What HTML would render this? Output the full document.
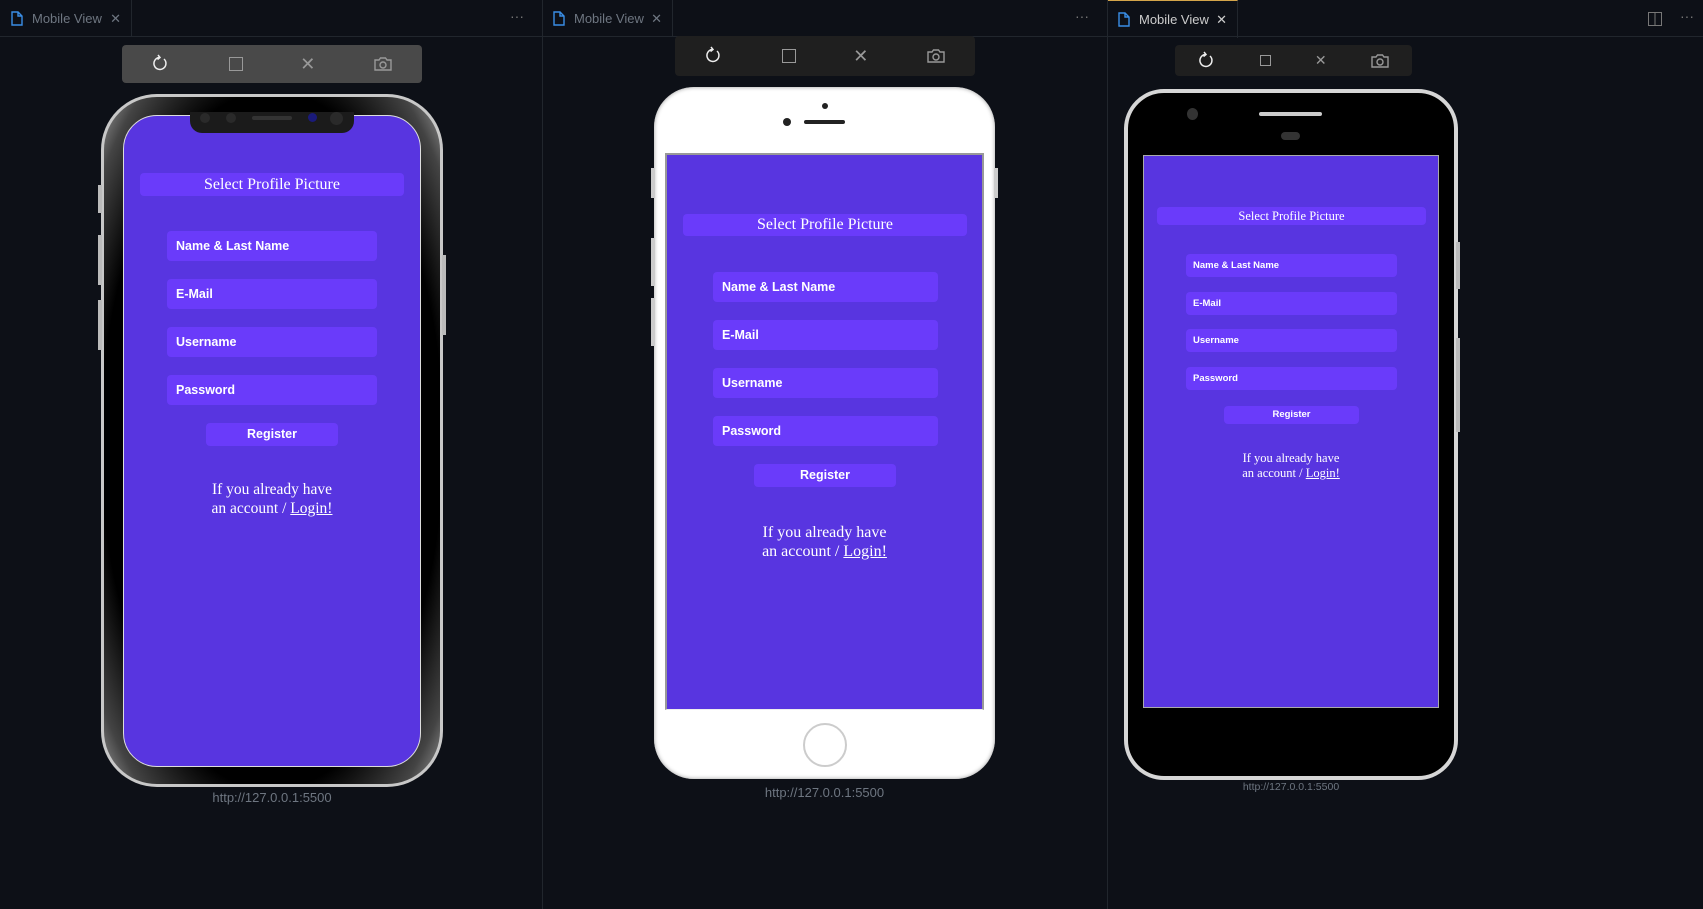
<!DOCTYPE html><html><head><style>
*{margin:0;padding:0;box-sizing:border-box}
body{width:1703px;height:909px;background:#0d1017;position:relative;overflow:hidden;font-family:"Liberation Sans",sans-serif}
.a{position:absolute}
.tabbar{top:0;height:37px;border-bottom:1px solid #21262d;background:#0d1017}
.tab{top:0;height:37px;color:#6e7681;font-size:13px;line-height:37px;padding-left:32px;border-right:1px solid #21262d}
.tab svg.ic{position:absolute;left:11px;top:11px}
.tab .x{position:absolute;right:10px;top:0;font-size:13px}
.div{top:0;width:1px;height:909px;background:#21262d}
.scr{background:#5835e0;overflow:hidden}
.f{background:#6a3bfa;border-radius:4px;color:#fff;font-weight:bold}
.t{color:#fff;font-family:"Liberation Serif",serif;text-align:center}
.tb{display:flex;justify-content:space-around;align-items:center;border-radius:4px}
.url{color:#6e7681;text-align:center}
</style></head><body>
<div class="a tabbar" style="left:0;width:1703px"></div>
<div class="a tab" style="left:0;width:132px"><svg class="ic" width="12" height="15" viewBox="0 0 12 15"><path d="M1 1h6l4 4v9H1z M7 1v4h4" fill="none" stroke="#3a8ee6" stroke-width="1.4"/></svg>Mobile View<span class="x">✕</span></div>
<div class="a tab" style="left:542px;width:131px"><svg class="ic" width="12" height="15" viewBox="0 0 12 15"><path d="M1 1h6l4 4v9H1z M7 1v4h4" fill="none" stroke="#3a8ee6" stroke-width="1.4"/></svg>Mobile View<span class="x">✕</span></div>
<div class="a tab" style="left:1107px;width:131px;color:#ccc;border-top:1px solid #d4a54a;height:38px"><svg class="ic" width="12" height="15" viewBox="0 0 12 15"><path d="M1 1h6l4 4v9H1z M7 1v4h4" fill="none" stroke="#3a8ee6" stroke-width="1.4"/></svg>Mobile View<span class="x" style="color:#ccc">✕</span></div>
<div class="a" style="left:510px;top:8px;color:#777;font-size:14px">···</div>
<div class="a" style="left:1075px;top:8px;color:#777;font-size:14px">···</div>
<div class="a" style="left:1680px;top:8px;color:#777;font-size:14px">···</div>
<svg class="a" style="left:1648px;top:12px" width="14" height="14"><rect x="0.5" y="0.5" width="13" height="13" fill="none" stroke="#777"/><line x1="7" y1="0" x2="7" y2="14" stroke="#777"/></svg>
<div class="a div" style="left:542px"></div><div class="a div" style="left:1107px"></div>

<!-- toolbars -->
<svg width="0" height="0" style="position:absolute"><defs>
<g id="ref"><path d="M13 5a6 6 0 1 1-5-1.5" fill="none" stroke="#eee" stroke-width="1.5"/><path d="M7 1l2 2.5-2.5 2" fill="none" stroke="#eee" stroke-width="1.5"/></g>
<g id="cam"><path d="M2 6h4l1.5-2h5L14 6h4v10H2z" fill="none" stroke="#999" stroke-width="1.4"/><circle cx="10" cy="11" r="3" fill="none" stroke="#999" stroke-width="1.4"/></g>
</defs></svg>
<div class="a tb" style="left:122px;top:45px;width:300px;height:38px;background:#494949;color:#999;font-size:18px"><svg width="20" height="20"><use href="#ref"/></svg><span style="width:14px;height:14px;border:1.5px solid #999;display:inline-block"></span><span>✕</span><svg width="20" height="20"><use href="#cam"/></svg></div>
<div class="a tb" style="left:675px;top:36px;width:300px;height:40px;background:#1f1f1f;color:#999;font-size:18px"><svg width="20" height="20"><use href="#ref"/></svg><span style="width:14px;height:14px;border:1.5px solid #999;display:inline-block"></span><span>✕</span><svg width="20" height="20"><use href="#cam"/></svg></div>
<div class="a tb" style="left:1175px;top:45px;width:237px;height:31px;background:#1f1f1f;color:#999;font-size:14px"><svg width="20" height="20"><use href="#ref"/></svg><span style="width:11px;height:11px;border:1.5px solid #999;display:inline-block"></span><span>✕</span><svg width="20" height="20"><use href="#cam"/></svg></div>

<!-- phone 1 -->
<div class="a" style="left:101px;top:94px;width:342px;height:693px;border-radius:56px;background:#c8c8c8;padding:3px"><div style="width:100%;height:100%;border-radius:53px;background:radial-gradient(ellipse,#000 72%,#444 90%,#999)"></div></div>
<div class="a" style="left:98px;top:185px;width:4px;height:28px;background:#bbb"></div>
<div class="a" style="left:98px;top:235px;width:4px;height:50px;background:#bbb"></div>
<div class="a" style="left:98px;top:300px;width:4px;height:50px;background:#bbb"></div>
<div class="a" style="left:442px;top:255px;width:4px;height:80px;background:#bbb"></div>
<div class="a scr" style="left:123px;top:115px;width:298px;height:652px;border-radius:34px;border:1px solid #ddd"></div>
<div class="a" style="left:190px;top:112px;width:164px;height:21px;background:#1b1b1b;border-radius:0 0 12px 12px"></div>
<div class="a" style="left:252px;top:116px;width:40px;height:4px;background:#333;border-radius:2px"></div>
<div class="a" style="left:308px;top:113px;width:9px;height:9px;background:#1a1a7a;border-radius:50%"></div>
<div class="a" style="left:200px;top:113px;width:10px;height:10px;background:#2a2a2a;border-radius:50%"></div>
<div class="a" style="left:226px;top:113px;width:10px;height:10px;background:#2a2a2a;border-radius:50%"></div>
<div class="a" style="left:330px;top:112px;width:13px;height:13px;background:#2a2a2a;border-radius:50%"></div>
<div class="a f t" style="left:140px;top:173px;width:264px;height:23px;font-weight:normal;font-size:16px;line-height:23px">Select Profile Picture</div>
<div class="a f" style="left:167px;top:231px;width:210px;height:30px;font-size:12.5px;line-height:30px;padding-left:9px">Name &amp; Last Name</div>
<div class="a f" style="left:167px;top:279px;width:210px;height:30px;font-size:12.5px;line-height:30px;padding-left:9px">E-Mail</div>
<div class="a f" style="left:167px;top:327px;width:210px;height:30px;font-size:12.5px;line-height:30px;padding-left:9px">Username</div>
<div class="a f" style="left:167px;top:375px;width:210px;height:30px;font-size:12.5px;line-height:30px;padding-left:9px">Password</div>
<div class="a f" style="left:206px;top:423px;width:132px;height:23px;font-size:12.5px;line-height:23px;text-align:center">Register</div>
<div class="a t" style="left:123px;top:480px;width:298px;font-size:15.5px;line-height:19px">If you already have<br>an account / <u>Login!</u></div>
<div class="a url" style="left:123px;top:790px;width:298px;font-size:13px">http://127.0.0.1:5500</div>

<!-- phone 2 -->
<div class="a" style="left:654px;top:87px;width:341px;height:692px;border-radius:40px;background:#fff;box-shadow:inset 0 0 4px #999"></div>
<div class="a" style="left:651px;top:168px;width:4px;height:30px;background:#ccc"></div>
<div class="a" style="left:651px;top:238px;width:4px;height:48px;background:#ccc"></div>
<div class="a" style="left:651px;top:298px;width:4px;height:48px;background:#ccc"></div>
<div class="a" style="left:994px;top:168px;width:4px;height:30px;background:#ccc"></div>
<div class="a" style="left:822px;top:103px;width:6px;height:6px;background:#222;border-radius:50%"></div>
<div class="a" style="left:783px;top:118px;width:8px;height:8px;background:#222;border-radius:50%"></div>
<div class="a" style="left:804px;top:120px;width:41px;height:4px;background:#222;border-radius:2px"></div>
<div class="a scr" style="left:665px;top:153px;width:319px;height:557px;border:2px solid #999;border-bottom:1px solid #eee"></div>
<div class="a f t" style="left:683px;top:214px;width:284px;height:22px;font-weight:normal;font-size:16px;line-height:22px">Select Profile Picture</div>
<div class="a f" style="left:713px;top:272px;width:225px;height:30px;font-size:12.5px;line-height:30px;padding-left:9px">Name &amp; Last Name</div>
<div class="a f" style="left:713px;top:320px;width:225px;height:30px;font-size:12.5px;line-height:30px;padding-left:9px">E-Mail</div>
<div class="a f" style="left:713px;top:368px;width:225px;height:30px;font-size:12.5px;line-height:30px;padding-left:9px">Username</div>
<div class="a f" style="left:713px;top:416px;width:225px;height:30px;font-size:12.5px;line-height:30px;padding-left:9px">Password</div>
<div class="a f" style="left:754px;top:464px;width:142px;height:23px;font-size:12.5px;line-height:23px;text-align:center">Register</div>
<div class="a t" style="left:665px;top:523px;width:319px;font-size:16px;line-height:19px">If you already have<br>an account / <u>Login!</u></div>
<div class="a" style="left:803px;top:723px;width:44px;height:44px;border:2px solid #ccc;border-radius:50%"></div>
<div class="a url" style="left:665px;top:785px;width:319px;font-size:13px">http://127.0.0.1:5500</div>

<!-- phone 3 -->
<div class="a" style="left:1124px;top:89px;width:334px;height:691px;border-radius:40px;background:#000;border:4px solid #d6d6d6"></div>
<div class="a" style="left:1456px;top:242px;width:4px;height:47px;background:#bbb"></div>
<div class="a" style="left:1456px;top:338px;width:4px;height:94px;background:#bbb"></div>
<div class="a" style="left:1187px;top:108px;width:11px;height:12px;background:#333;border-radius:50%"></div>
<div class="a" style="left:1259px;top:112px;width:63px;height:4px;background:#ccc;border-radius:2px"></div>
<div class="a" style="left:1281px;top:132px;width:19px;height:8px;background:#333;border-radius:4px"></div>
<div class="a scr" style="left:1143px;top:155px;width:296px;height:553px;border:1px solid #aaa"></div>
<div class="a f t" style="left:1157px;top:207px;width:269px;height:18px;font-weight:normal;font-size:12.5px;line-height:18px">Select Profile Picture</div>
<div class="a f" style="left:1186px;top:254px;width:211px;height:23px;font-size:9.5px;line-height:23px;padding-left:7px">Name &amp; Last Name</div>
<div class="a f" style="left:1186px;top:292px;width:211px;height:23px;font-size:9.5px;line-height:23px;padding-left:7px">E-Mail</div>
<div class="a f" style="left:1186px;top:329px;width:211px;height:23px;font-size:9.5px;line-height:23px;padding-left:7px">Username</div>
<div class="a f" style="left:1186px;top:367px;width:211px;height:23px;font-size:9.5px;line-height:23px;padding-left:7px">Password</div>
<div class="a f" style="left:1224px;top:406px;width:135px;height:18px;font-size:9.5px;line-height:18px;text-align:center">Register</div>
<div class="a t" style="left:1143px;top:451px;width:296px;font-size:12.5px;line-height:15px">If you already have<br>an account / <u>Login!</u></div>
<div class="a url" style="left:1143px;top:781px;width:296px;font-size:10.5px">http://127.0.0.1:5500</div>
</body></html>
